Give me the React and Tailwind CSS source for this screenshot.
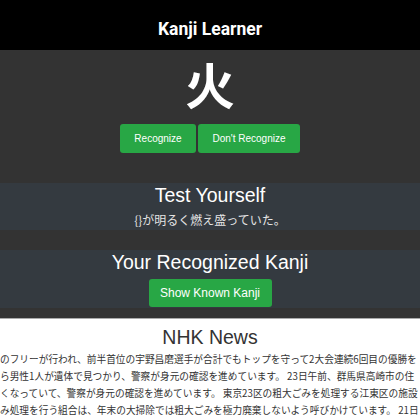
import React from 'react';

const newsLines = [
  'のフリーが行われ、前半首位の宇野昌磨選手が合計でもトップを守って2大会連続6回目の優勝を',
  'ら男性1人が遺体で見つかり、警察が身元の確認を進めています。 23日午前、群馬県高崎市の住',
  'くなっていて、警察が身元の確認を進めています。 東京23区の粗大ごみを処理する江東区の施設',
  'み処理を行う組合は、年末の大掃除では粗大ごみを極力廃棄しないよう呼びかけています。 21日',
];

const GreenButton = ({ children, className = '' }) => (
  <button className={`bg-[#28a745] text-white rounded-[3px] ${className}`}>
    {children}
  </button>
);

const App = () => {
  return (
    <div className="w-[420px] h-[420px] overflow-hidden bg-white font-['Liberation_Sans',Arial,sans-serif]">
      {/* Header */}
      <header className="h-[50px] bg-black flex items-center justify-center pt-[8px]">
        <h1 className="text-white text-[17.5px] font-bold font-['Roboto','Liberation_Sans',sans-serif]">
          Kanji Learner
        </h1>
      </header>

      {/* Current kanji */}
      <section className="bg-[#333333] h-[133px] flex flex-col items-center pt-[8px]">
        <div className="text-white text-[50px] leading-[50px] font-bold font-['Noto_Sans_CJK_JP',sans-serif]">
          火
        </div>
        <div className="flex gap-[2px] mt-[16px]">
          <GreenButton className="w-[76px] h-[29px] text-[10px]">Recognize</GreenButton>
          <GreenButton className="w-[102px] h-[29px] text-[10px]">Don't Recognize</GreenButton>
        </div>
      </section>

      {/* Test yourself */}
      <section className="bg-[#343a40] h-[47px] flex flex-col items-center pt-[1px]">
        <h2 className="text-white text-[19.5px] leading-[22px]">Test Yourself</h2>
        <p className="text-[#e5e5e5] text-[12px] leading-[16px] mt-[6px] font-['Noto_Sans_CJK_JP',sans-serif]">
          {'{}'}が明るく燃え盛っていた。
        </p>
      </section>

      <div className="h-[20px] bg-[#333333]" />

      {/* Recognized kanji */}
      <section className="bg-[#343a40] h-[58px] flex flex-col items-center pt-[1px]">
        <h2 className="text-white text-[19.5px] leading-[22px]">Your Recognized Kanji</h2>
        <GreenButton className="mt-[6px] w-[123px] h-[28px] text-[12px]">Show Known Kanji</GreenButton>
      </section>

      <div className="h-[11px] bg-[#333333] border-b border-[#aaaaaa]" />

      {/* News */}
      <section className="bg-white pt-[7px]">
        <h2 className="text-center text-[#333333] text-[19.5px] leading-[22px]">NHK News</h2>
        <div className="mt-[3px] text-[#333333] text-[9.7px] leading-[17px] font-['Noto_Sans_CJK_JP',sans-serif]">
          {newsLines.map((line, i) => (
            <p key={i} className="whitespace-nowrap overflow-hidden">
              {line}
            </p>
          ))}
        </div>
      </section>
    </div>
  );
};

export default App;
